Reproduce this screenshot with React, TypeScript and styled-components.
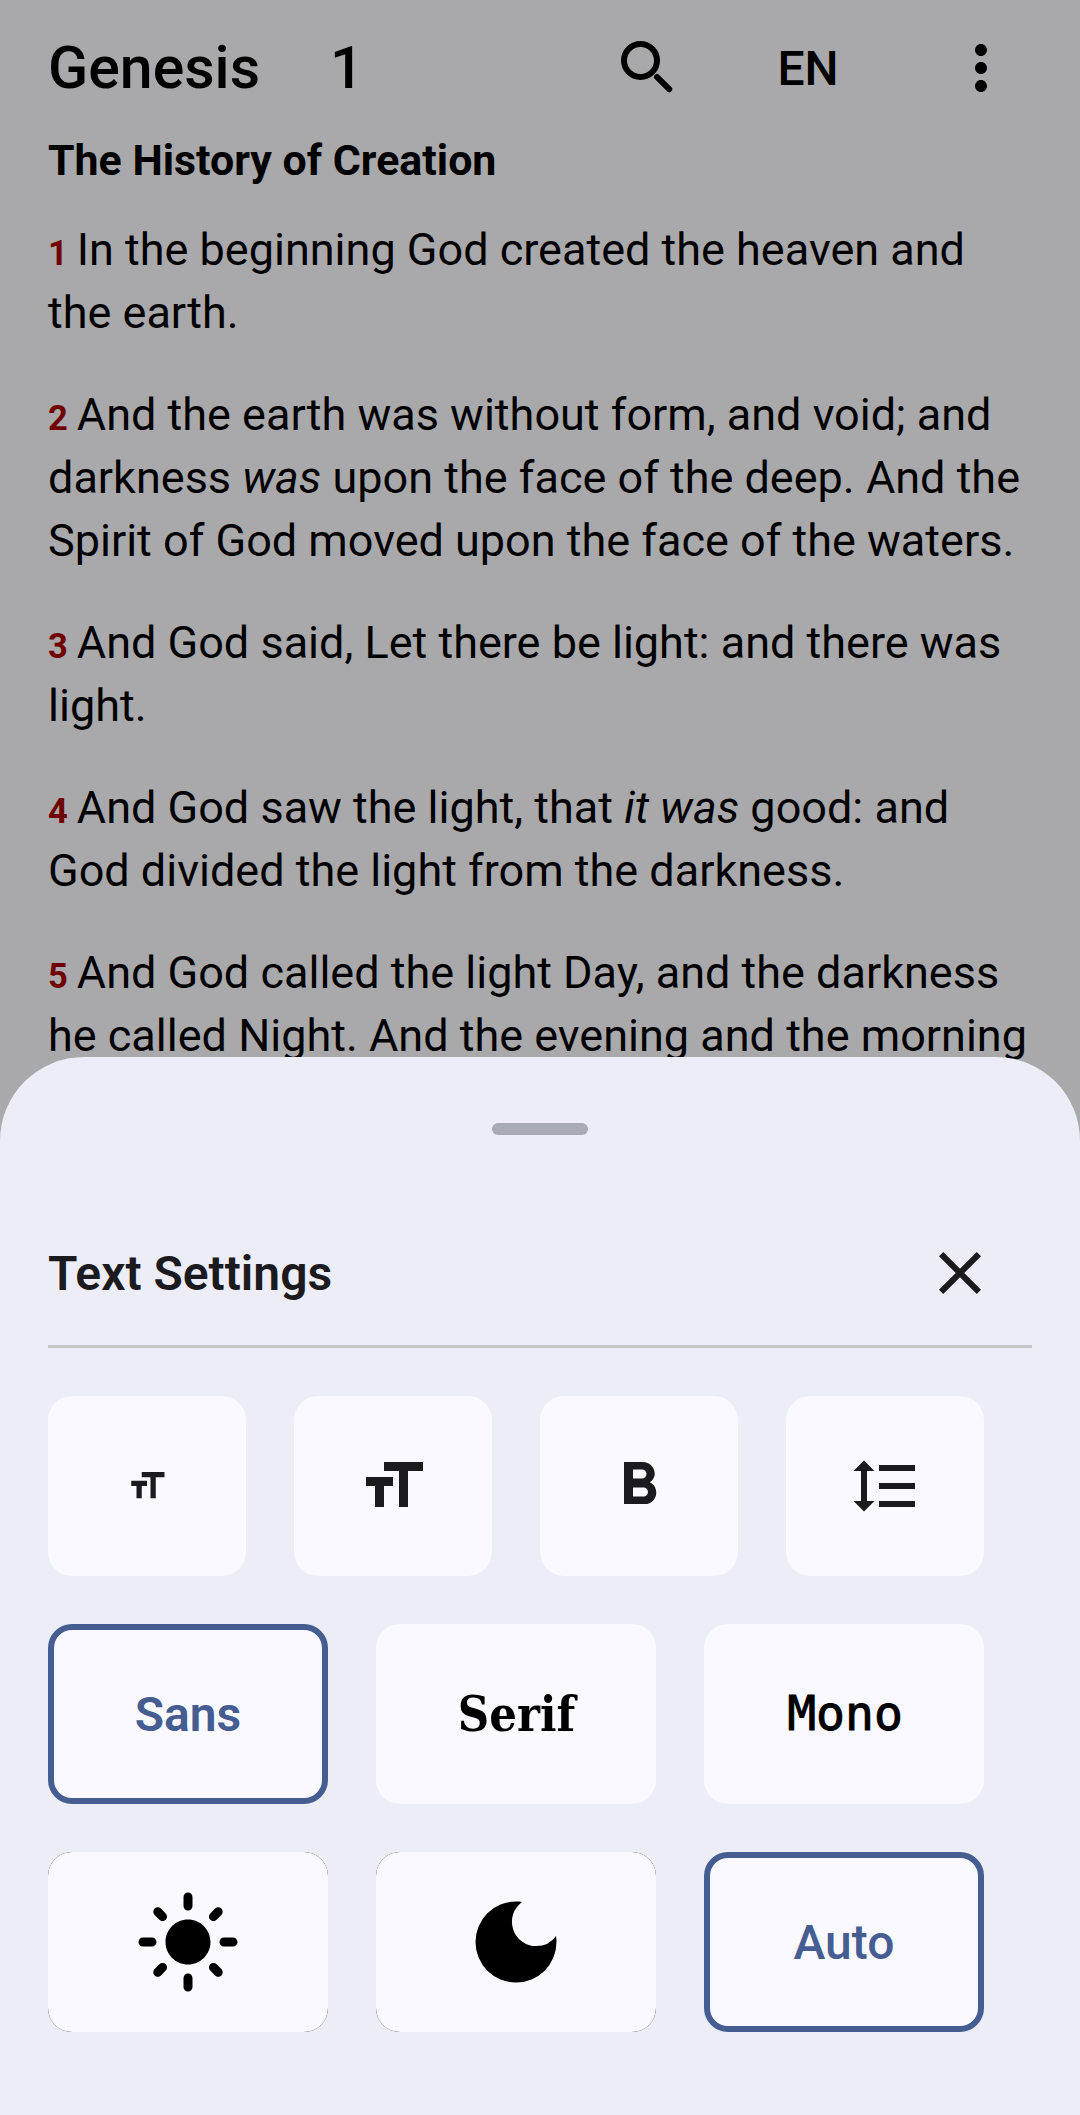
import React from "react";
import styled, { createGlobalStyle } from "styled-components";
import {
  MdClose,
  MdDarkMode,
  MdFormatBold,
  MdFormatLineSpacing,
  MdFormatSize,
  MdLightMode,
  MdMoreVert,
} from "react-icons/md";

const sans = `Roboto, "Liberation Sans", sans-serif`;
const serif = `"DejaVu Serif Condensed", "DejaVu Serif", serif`;
const mono = `"DejaVu Sans Mono", monospace`;

const GlobalStyle = createGlobalStyle`
  * { box-sizing: border-box; }
  body { margin: 0; background: #a9a9ab; font-family: ${sans}; }
  svg { display: block; flex: none; }
  button { font: inherit; color: inherit; background: none; border: 0; padding: 0; }
`;

const Screen = styled.div`
  position: relative;
  width: 1080px;
  height: 2115px;
  overflow: hidden;
  background: #a9a9ab;
  color: #000;
`;

const TopBar = styled.header`
  display: flex;
  align-items: center;
  height: 136px;
  padding: 0 63px 0 48px;
`;

const BookTitle = styled.button`
  font-size: 59px;
  font-weight: 500;
  line-height: 70px;
  width: 282px;
  text-align: left;
`;

const ChapterNumber = styled(BookTitle)`
  width: 282px;
`;

const IconButton = styled.button`
  display: flex;
  align-items: center;
  justify-content: center;
  width: 72px;
  height: 72px;
`;

const LanguageButton = styled.button`
  flex: 1;
  padding: 2px 13px 0 0;
  text-align: center;
  font-size: 48px;
  font-weight: 500;
  line-height: 56px;
`;

const Chapter = styled.main`
  padding: 0 48px;
`;

const SectionHeading = styled.h2`
  margin: 0 0 34px;
  font-size: 42.9px;
  font-weight: 700;
  line-height: 48px;
  white-space: nowrap;
`;

const Verse = styled.p`
  margin: 0 0 39px;
  font-size: 45px;
  line-height: 63px;
`;

const Line = styled.span`
  display: block;
  white-space: nowrap;
`;

const VerseNumber = styled.span`
  margin-right: 9px;
  font-size: 34.5px;
  font-weight: 700;
  line-height: 1;
  color: #700000;
`;

const Sheet = styled.section`
  position: absolute;
  left: 0;
  right: 0;
  top: 1057px;
  bottom: 0;
  padding: 66px 48px 0;
  border-radius: 84px 84px 0 0;
  background: #ecedf6;
`;

const DragHandle = styled.div`
  width: 96px;
  height: 12px;
  margin: 0 auto;
  border-radius: 6px;
  background: #a8aab4;
`;

const SheetHeader = styled.div`
  display: flex;
  align-items: center;
  justify-content: space-between;
  height: 144px;
  margin-top: 66px;
  padding-right: 36px;
  color: #1b1b1f;
`;

const SheetTitle = styled.h1`
  margin: 0;
  padding-top: 2px;
  font-size: 48px;
  font-weight: 600;
  line-height: 72px;
`;

const Divider = styled.hr`
  height: 3px;
  margin: 0 0 48px;
  border: 0;
  background: #c5c5c8;
`;

const Options = styled.div`
  display: grid;
  gap: 48px;
  width: 936px;
`;

const OptionRow = styled.div<{ $columns: number }>`
  display: grid;
  grid-template-columns: repeat(${(p) => p.$columns}, 1fr);
  gap: 48px;
`;

const Option = styled.button<{ $selected?: boolean; $glyph?: boolean }>`
  display: flex;
  align-items: center;
  justify-content: center;
  height: 180px;
  border-radius: 24px;
  border: ${(p) => (p.$selected ? "6px solid #465d91" : "0")};
  background: #faf9ff;
  color: ${(p) => (p.$selected ? "#465d91" : p.$glyph ? "#1b1b1f" : "#000")};
`;

/* The dark base shows only as a hairline along the rounded corners. */
const ThemeOption = styled(Option)`
  position: relative;
  isolation: isolate;
  background: #000;

  &::before {
    content: "";
    position: absolute;
    inset: 0;
    z-index: -1;
    border-radius: 24px;
    background: #faf9ff;
  }
`;

const Label = styled.span<{ $weight?: number }>`
  padding-top: 2px;
  font-family: ${sans};
  font-size: 48px;
  font-weight: ${(p) => p.$weight ?? 500};
  line-height: 56px;
`;

const SerifLabel = styled(Label)`
  padding: 0 0 1px 1px;
  font-family: ${serif};
  font-size: 48.4px;
`;

const MonoLabel = styled(Label)`
  padding: 0 0 2px 2px;
  font-family: ${mono};
  -webkit-text-stroke: 1px currentColor;
`;

const SearchIcon = () => (
  <svg width="72" height="72" viewBox="0 0 72 72" fill="none" stroke="currentColor" strokeWidth="6" strokeLinecap="round">
    <circle cx="28.5" cy="28.5" r="16.5" />
    <path d="M45 45 57.2 57.2" />
  </svg>
);

const verses: React.ReactNode[][] = [
  ["In the beginning God created the heaven and", "the earth."],
  [
    "And the earth was without form, and void; and",
    <>darkness <em>was</em> upon the face of the deep. And the</>,
    "Spirit of God moved upon the face of the waters.",
  ],
  ["And God said, Let there be light: and there was", "light."],
  [<>And God saw the light, that <em>it was</em> good: and</>, "God divided the light from the darkness."],
  ["And God called the light Day, and the darkness", "he called Night. And the evening and the morning"],
];

export default function App() {
  return (
    <Screen>
      <GlobalStyle />
      <TopBar>
        <BookTitle>Genesis</BookTitle>
        <ChapterNumber>1</ChapterNumber>
        <IconButton aria-label="Search"><SearchIcon /></IconButton>
        <LanguageButton>EN</LanguageButton>
        <IconButton aria-label="More"><MdMoreVert size={72} /></IconButton>
      </TopBar>
      <Chapter>
        <SectionHeading>The History of Creation</SectionHeading>
        {verses.map((lines, v) => (
          <Verse key={v}>
            {lines.map((line, i) => (
              <Line key={i}>
                {i === 0 && <VerseNumber>{v + 1}</VerseNumber>}
                {line}
              </Line>
            ))}
          </Verse>
        ))}
      </Chapter>
      <Sheet>
        <DragHandle />
        <SheetHeader>
          <SheetTitle>Text Settings</SheetTitle>
          <IconButton aria-label="Close"><MdClose size={72} /></IconButton>
        </SheetHeader>
        <Divider />
        <Options>
          <OptionRow $columns={4}>
            <Option $glyph aria-label="Smaller text"><MdFormatSize size={42} /></Option>
            <Option $glyph aria-label="Larger text"><MdFormatSize size={72} /></Option>
            <Option $glyph aria-label="Bold"><MdFormatBold size={72} /></Option>
            <Option $glyph aria-label="Line spacing"><MdFormatLineSpacing size={72} /></Option>
          </OptionRow>
          <OptionRow $columns={3}>
            <Option $selected><Label $weight={600}>Sans</Label></Option>
            <Option><SerifLabel $weight={700}>Serif</SerifLabel></Option>
            <Option><MonoLabel $weight={400}>Mono</MonoLabel></Option>
          </OptionRow>
          <OptionRow $columns={3}>
            <ThemeOption aria-label="Light"><MdLightMode size={108} /></ThemeOption>
            <ThemeOption aria-label="Dark"><MdDarkMode size={108} /></ThemeOption>
            <Option $selected><Label>Auto</Label></Option>
          </OptionRow>
        </Options>
      </Sheet>
    </Screen>
  );
}
